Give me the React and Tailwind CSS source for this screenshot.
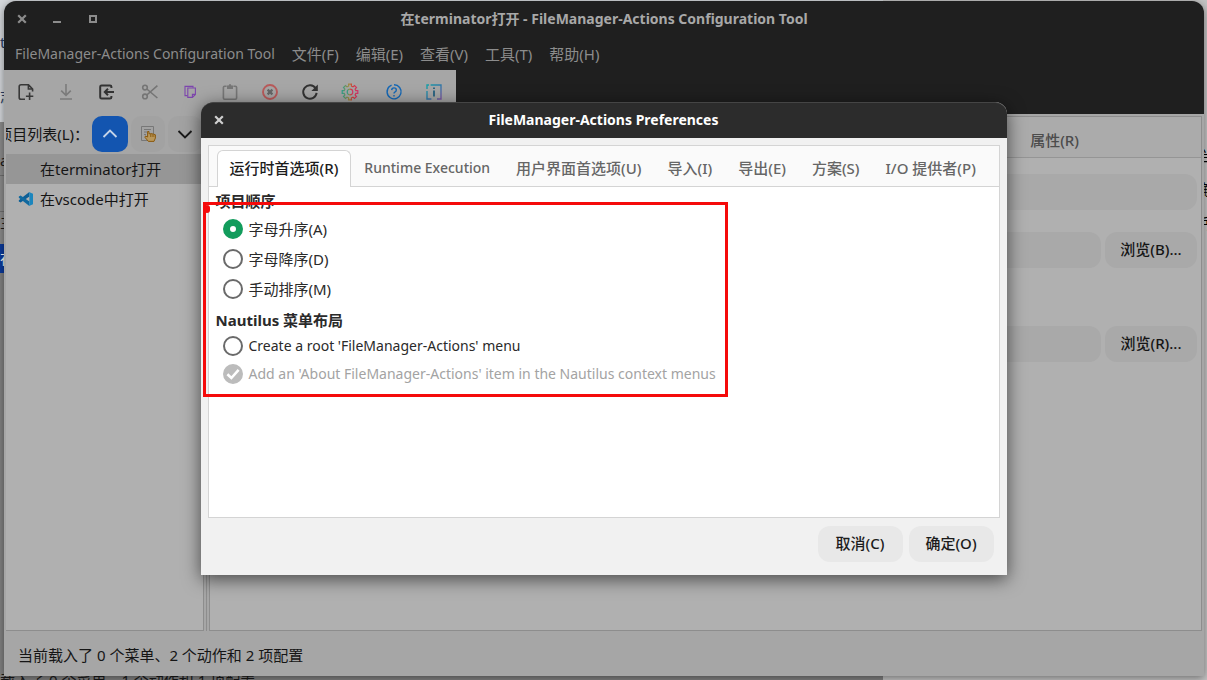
import { useState } from "react";

const PREF_TABS = [
  { label: "运行时首选项(R)" },
  { label: "Runtime Execution", latin: true },
  { label: "用户界面首选项(U)" },
  { label: "导入(I)" },
  { label: "导出(E)" },
  { label: "方案(S)" },
  { label: "I/O 提供者(P)" },
];

const MENUS = ["文件(F)", "编辑(E)", "查看(V)", "工具(T)", "帮助(H)"];

function Icon({ children, className = "size-[18px]" }) {
  return (
    <svg viewBox="0 0 18 18" fill="none" stroke="currentColor" strokeWidth="1.6" className={className} aria-hidden="true">
      {children}
    </svg>
  );
}

function CloseIcon() {
  return (
    <svg viewBox="0 0 10 10" className="size-2.5" fill="none" stroke="currentColor" strokeWidth="2.2" aria-hidden="true">
      <path d="M1.2 1.2 8.8 8.8M8.8 1.2 1.2 8.8" />
    </svg>
  );
}

function ToolButton({ label, className = "", children }) {
  return (
    <button type="button" aria-label={label} className={`flex h-10 w-10 items-center justify-center ${className}`}>
      <Icon>{children}</Icon>
    </button>
  );
}

function Toolbar() {
  return (
    <div className="flex h-11 w-fit gap-1 bg-[#a6a6a6] px-0.5 pt-0.5">
      <div className="flex">
        <ToolButton label="New action" className="text-[#383838]">
          <path d="M8 16.2H4Q2.2 16.2 2.2 14.4V3.6Q2.2 1.8 4 1.8H11.5L15.6 6V8.4M11.4 2V6H15.4" />
          <path d="M12.6 9.6V17M8.9 13.3H16.3" />
        </ToolButton>
        <ToolButton label="Save" className="text-[#7b7b7b]">
          <path d="M9 1V12M4.2 7.6 9 12.4 13.8 7.6M3 16H15" />
        </ToolButton>
        <ToolButton label="Import" className="text-[#333333]">
          <path d="M14.4 5V3.8Q14.4 2.4 13 2.4H4.6Q3.2 2.4 3.2 3.8V14.2Q3.2 15.6 4.6 15.6H13Q14.4 15.6 14.4 14.2V13" strokeWidth="2" />
          <path d="M17 9H8M11 5.8 7.8 9 11 12.2" strokeWidth="2" />
        </ToolButton>
      </div>
      <div className="flex">
        <ToolButton label="Cut" className="text-[#757575]">
          <circle cx="4" cy="4.6" r="2.3" />
          <circle cx="4" cy="13.4" r="2.3" />
          <path d="M5.8 6 16.4 15M5.8 12 16.4 2.6" />
        </ToolButton>
        <ToolButton label="Copy" className="text-[#7d45ad]">
          <path d="M6.8 5H14.4V11.4L11.4 14.4H6.8ZM11.4 14.4V11.4H14.4" strokeWidth="1.1" />
          <path d="M6.4 12.6H4V3.4H12V4.8" strokeWidth="1.1" />
        </ToolButton>
        <ToolButton label="Paste" className="text-[#777777]">
          <path d="M5.6 3.2H3.6Q2.4 3.2 2.4 4.4V15Q2.4 16.2 3.6 16.2H14.4Q15.6 16.2 15.6 15V4.4Q15.6 3.2 14.4 3.2H12.4" />
          <path d="M6 2.4H7.6Q9 -.2 10.4 2.4H12V6H6Z" fill="currentColor" stroke="none" />
        </ToolButton>
        <ToolButton label="Delete" className="text-[#b85a5a]">
          <circle cx="9" cy="9" r="7" strokeWidth="1.9" />
          <path d="M6.6 6.6 11.4 11.4M11.4 6.6 6.6 11.4" stroke="#666666" strokeWidth="2.2" />
        </ToolButton>
        <ToolButton label="Reload" className="text-[#333333]">
          <path d="M14.6 5.4A6.7 6.7 0 1 0 15.6 9.8" strokeWidth="2" />
          <path d="M16.8 1.4V8H10.4Z" fill="currentColor" stroke="none" />
        </ToolButton>
        <ToolButton label="Preferences">
          <defs>
            <linearGradient id="gear" x1="0" y1="0" x2="1" y2="0">
              <stop offset="0" stopColor="#2fa08a" />
              <stop offset=".45" stopColor="#a98a3c" />
              <stop offset=".65" stopColor="#cf3d3d" />
              <stop offset="1" stopColor="#d3356e" />
            </linearGradient>
          </defs>
          <g stroke="url(#gear)" strokeWidth="1.2">
            <path d="M7.6 1.2H10.4V3.2L12 3.9 13.5 2.5 15.5 4.5 14.1 6 14.8 7.6H16.8V10.4H14.8L14.1 12 15.5 13.5 13.5 15.5 12 14.1 10.4 14.8V16.8H7.6V14.8L6 14.1 4.5 15.5 2.5 13.5 3.9 12 3.2 10.4H1.2V7.6H3.2L3.9 6 2.5 4.5 4.5 2.5 6 3.9 7.6 3.2Z" />
            <circle cx="9" cy="9" r="2.8" />
          </g>
        </ToolButton>
      </div>
      <div className="flex">
        <ToolButton label="Help" className="text-[#1467b5]">
          <path d="M4.4 3.6A7 7 0 1 0 9 1.8M2.4 6.4A7 7 0 0 1 6.6 2.2" strokeWidth="1.4" />
          <path d="M6.7 7.1Q6.8 4.9 9 4.9 11.3 4.9 11.3 6.9 11.3 8.1 10.1 8.8 9 9.4 9 10.6M9 12V13.4" strokeWidth="1.4" />
        </ToolButton>
        <ToolButton label="About">
          <defs>
            <linearGradient id="info" x1="0" y1="0" x2="1" y2="1">
              <stop offset="0" stopColor="#16a0a8" />
              <stop offset=".5" stopColor="#3079a8" />
              <stop offset="1" stopColor="#7a56a0" />
            </linearGradient>
          </defs>
          <path d="M5.6 2H16V16H12M2 6V2H4M6.4 16H2V8" stroke="url(#info)" strokeWidth="1.4" />
          <path d="M9 4.4V6M9 7.4V13.6" stroke="#25607f" strokeWidth="1.8" />
        </ToolButton>
      </div>
    </div>
  );
}

function VscodeIcon() {
  return (
    <svg viewBox="0 0 16 16" className="size-4" aria-hidden="true">
      <path d="M11 1.2 11.4 5.4 2.6 11.6 .8 10.4V9.2Z" fill="#0d5f96" />
      <path d="M11 14.8 11.4 10.6 2.6 4.4 .8 5.6V6.8Z" fill="#11699f" />
      <path d="M11 1 15 2.8V13.2L11 15 11.4 11.6V4.4Z" fill="#1c86bd" />
    </svg>
  );
}

function Sidebar() {
  return (
    <aside className="flex w-[202px] shrink-0 flex-col pl-0.5">
      <div className="flex h-10 items-center justify-end gap-[3px] overflow-hidden pr-1">
        <span className="flex shrink-0 justify-end whitespace-nowrap text-[#151515]">项目列表(L)：</span>
        <button type="button" aria-label="Collapse" className="flex size-9 shrink-0 items-center justify-center rounded-[10px] bg-[#1355b0] text-[#c4d3e8]">
          <Icon>
            <path d="M2.5 12 9 5.6 15.5 12" strokeWidth="1.9" />
          </Icon>
        </button>
        <button type="button" aria-label="Sort manually" className="flex h-9 w-[34px] shrink-0 items-center justify-center rounded-[10px] bg-[#a2a2a2]">
          <Icon>
            <path d="M2.5 1.5H14.5V15.5H2.5ZM5 4.5H12M5 7H8M5 9.5H7" stroke="#777777" strokeWidth="1" />
            <path d="M8.6 6.5V12L6.4 11 6 12.4 9.4 16.4H15L16.4 13V9.8L14.8 9.2 13.2 8.8 11.6 8.6 10 8.8V6.5Z" fill="#b9975a" stroke="#8a5a10" strokeWidth="1" />
            <path d="M11.6 9V12M13.2 9.2V12M14.8 9.6V12" stroke="#8a5a10" strokeWidth=".8" />
          </Icon>
        </button>
        <button type="button" aria-label="Expand" className="flex h-9 w-[34px] shrink-0 items-center justify-center rounded-[10px] bg-[#a2a2a2] text-[#1a1a1a]">
          <Icon>
            <path d="M2.5 6 9 12.4 15.5 6" strokeWidth="1.9" />
          </Icon>
        </button>
      </div>
      <ul className="mr-0.5 flex-1 border-r border-b border-[#8d8d8d] bg-[#b0b0b0] text-[#151515]">
        <li className="flex h-[30px] items-center bg-[#969696] pl-[34px]">在terminator打开</li>
        <li className="flex h-[30px] items-center gap-1.5 pl-3">
          <VscodeIcon />
          在vscode中打开
        </li>
      </ul>
    </aside>
  );
}

function BrowseRow({ label, name }) {
  return (
    <div className="flex gap-1">
      <input aria-label={name} className="h-9 min-w-0 flex-1 rounded-xl bg-[#a9a9a9] px-3" />
      <button type="button" className="h-9 w-[92px] rounded-xl bg-[#a9a9a9] pb-0.5 font-medium text-[#151515]">
        {label}
      </button>
    </div>
  );
}

function ActionEditor() {
  return (
    <section className="mt-0.5 flex flex-1 flex-col border border-[#8d8d8d] bg-[#b0b0b0]">
      <div className="flex h-[41px] items-center justify-end border-b border-[#959595] bg-[#ababab] pt-1.5 pr-[122px] font-medium text-[#4c4c4c]">
        <button type="button">属性(R)</button>
      </div>
      <div className="flex flex-col px-1 pt-4">
        <input aria-label="Label" className="h-9 rounded-xl bg-[#a9a9a9] px-3" />
        <div className="mt-[22px]">
          <BrowseRow label="浏览(B)..." name="Icon" />
        </div>
        <div className="mt-[58px]">
          <BrowseRow label="浏览(R)..." name="Path" />
        </div>
      </div>
    </section>
  );
}

function MainWindow() {
  return (
    <div className="relative flex flex-1 flex-col overflow-hidden rounded-t-xl bg-[#a6a6a6] shadow-[0_2px_8px_rgba(0,0,0,0.45)]">
      <header className="bg-[#1f1f1f]">
        <div className="grid h-[37px] grid-cols-[1fr_auto_1fr] items-center pb-px">
          <div className="flex items-center gap-[26px] pl-[13px] text-[#8c8c8c]">
            <button type="button" aria-label="Close window"><CloseIcon /></button>
            <button type="button" aria-label="Minimize" className="flex h-2.5 w-2.5 items-end pb-px">
              <span className="h-0.5 w-2 bg-[#8c8c8c]" />
            </button>
            <button type="button" aria-label="Maximize" className="size-2 border-2 border-[#8c8c8c]" />
          </div>
          <h1 className="text-sm font-bold text-[#a8a8a8]">在terminator打开 - FileManager-Actions Configuration Tool</h1>
        </div>
        <nav className="flex h-8 items-center gap-[17px] pb-px pl-[11px] text-[#8c8c8c]">
          <button type="button" className="text-sm">FileManager-Actions Configuration Tool</button>
          {MENUS.map((m) => (
            <button key={m} type="button">{m}</button>
          ))}
        </nav>
        <Toolbar />
      </header>
      <main className="flex flex-1 pr-0.5">
        <Sidebar />
        <div className="w-[3px] border-l border-[#8d8d8d]" />
        <ActionEditor />
      </main>
      <footer className="flex h-[45px] items-center pt-0.5 pl-[14px] text-[#151515]">
        当前载入了 0 个菜单、2 个动作和 2 项配置
      </footer>
    </div>
  );
}

function Choice({ type, label, name, latin, disabled, ...rest }) {
  return (
    <label className={`flex w-fit items-center gap-1.5 pl-[7px] ${latin ? "h-7 text-sm" : "h-[30px]"} ${disabled ? "text-[#a3a3a3]" : "text-[#2a2a2a]"}`}>
      <span className="grid size-5">
        <input
          type={type}
          name={name}
          disabled={disabled}
          className={`col-start-1 row-start-1 size-5 appearance-none rounded-full border-2 border-[#6a6a6a] bg-white disabled:border-[#bcbcbc] disabled:bg-[#bcbcbc] ${type === "radio" ? "checked:border-[7px] checked:border-[#129c5c]" : "peer"}`}
          {...rest}
        />
        {type === "checkbox" && (
          <svg viewBox="0 0 20 20" className="pointer-events-none invisible col-start-1 row-start-1 size-5 peer-checked:visible" fill="none" stroke="#ffffff" strokeWidth="2.6" aria-hidden="true">
            <path d="M4.4 10.2 8.4 14 15.6 5.8" />
          </svg>
        )}
      </span>
      {label}
    </label>
  );
}

function Preferences() {
  const [tab, setTab] = useState(0);
  const [root, setRoot] = useState(false);
  return (
    <div role="dialog" aria-label="FileManager-Actions Preferences" className="relative flex w-[806px] flex-col rounded-t-xl bg-[#f1f1f1] shadow-[0_4px_18px_rgba(0,0,0,0.6)]">
      <div className="grid h-9 grid-cols-[1fr_auto_1fr] items-center rounded-t-xl border-t border-[#454545] bg-[#2c2c2c] pb-0.5">
        <button type="button" aria-label="Close" className="w-fit pl-[13px] text-[#cfcfcf]"><CloseIcon /></button>
        <h2 className="text-sm font-bold text-white">FileManager-Actions Preferences</h2>
      </div>
      <div className="mx-[7px] mt-[7px] flex flex-col border border-[#d4d4d4] bg-white">
        <div role="tablist" className="flex h-[41px] items-end bg-[#fafafa] pl-2 shadow-[inset_0_-1px_0_#d4d4d4]">
          {PREF_TABS.map((t, i) => (
            <button
              key={t.label}
              type="button"
              role="tab"
              aria-selected={i === tab}
              onClick={() => setTab(i)}
              className={`h-[37px] whitespace-nowrap px-3 pb-0.5 font-medium ${t.latin ? "text-sm" : ""} ${i === tab ? "rounded-t-md border border-b-0 border-[#d4d4d4] bg-white text-[#1c1c1c]" : "border border-transparent text-[#666666]"}`}
            >
              {t.label}
            </button>
          ))}
        </div>
        <div className="h-[330px] px-[7px]">
          <fieldset>
            <legend className="flex h-[27px] items-center font-bold text-[#2a2a2a]">项目顺序</legend>
            <Choice type="radio" name="order" label="字母升序(A)" defaultChecked />
            <Choice type="radio" name="order" label="字母降序(D)" />
            <Choice type="radio" name="order" label="手动排序(M)" />
          </fieldset>
          <fieldset>
            <legend className="flex h-7 items-center pt-1 font-bold text-[#2a2a2a]">Nautilus 菜单布局</legend>
            <Choice type="checkbox" latin label="Create a root 'FileManager-Actions' menu" checked={root} onChange={() => setRoot(!root)} />
            <Choice type="checkbox" latin label="Add an 'About FileManager-Actions' item in the Nautilus context menus" disabled defaultChecked />
          </fieldset>
        </div>
      </div>
      <div className="flex justify-end gap-1.5 px-[13px] pt-2 pb-[13px] font-medium text-[#1c1c1c]">
        <button type="button" className="h-9 w-[85px] rounded-xl bg-[#e8e8e8] pb-0.5">取消(C)</button>
        <button type="button" className="h-9 w-[85px] rounded-xl bg-[#e8e8e8] pb-0.5">确定(O)</button>
      </div>
      <div className="pointer-events-none absolute top-[100px] left-0.5 h-[195px] w-[525px] border-3 border-[#f50a0a]">
        <span className="absolute top-0 -left-0.5 h-2 w-1.5 rounded-full bg-[#f50a0a]" />
      </div>
    </div>
  );
}

function Desktop() {
  return (
    <div aria-hidden="true" className="absolute inset-0 flex overflow-hidden bg-[#c4c4c4]">
      <div className="flex w-[883px] flex-col bg-[#828282] text-[#1a1a1a]">
        <div className="h-[122px] bg-[#d5d8dc] text-[#2a3f66]">
          <div className="h-[88px] w-3 overflow-hidden pt-8">ti</div>
          <div className="h-6 w-3 overflow-hidden leading-4">志</div>
        </div>
        <div className="h-[122px] w-3 overflow-hidden bg-[#8c8c8c]">
          <div className="h-[54px] border-b border-[#6f6f6f] pt-7 leading-5">a</div>
          <div className="h-9 border-b border-[#6f6f6f]" />
          <div className="leading-5">主</div>
        </div>
        <div className="h-[29px] w-3 overflow-hidden bg-[#0b3a9c] leading-7 text-white">在</div>
        <div className="flex-1" />
        <div className="h-[10px] whitespace-nowrap leading-5">载入了 0 个菜单、1 个动作和 1 项配置</div>
      </div>
      <div className="flex flex-1 flex-col items-end overflow-hidden pt-[138px] leading-[34px] text-black">
        <span className="h-[34px] w-1.5 overflow-hidden">当</span>
        <span className="h-[34px] w-1.5 overflow-hidden">解</span>
        <span className="h-[34px] w-1.5 overflow-hidden">所</span>
      </div>
    </div>
  );
}

export default function App() {
  return (
    <div className="relative flex min-h-screen pt-px pr-[3px] pb-1 pl-1 font-['Noto_Sans','Noto_Sans_CJK_SC',sans-serif] text-[15px] leading-5">
      <Desktop />
      <MainWindow />
      <div className="absolute inset-x-0 top-[102px] flex justify-center">
        <Preferences />
      </div>
    </div>
  );
}
